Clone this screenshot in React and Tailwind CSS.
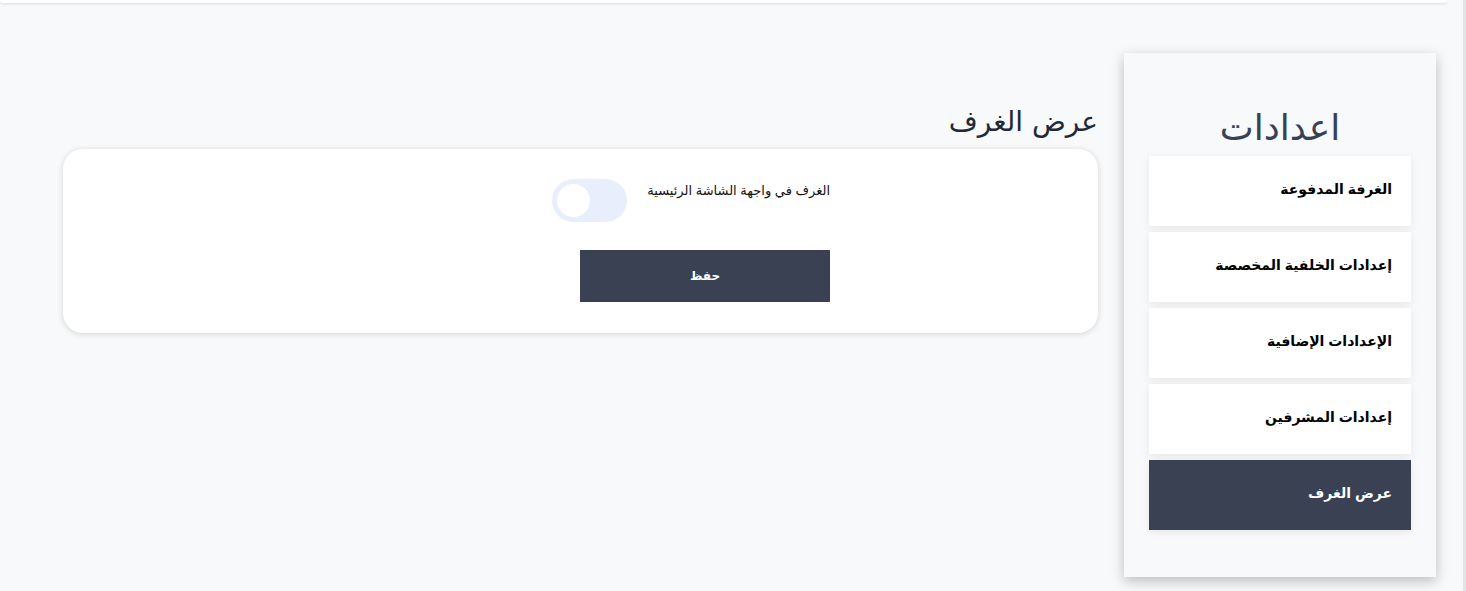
import { useState } from 'react';

const menu = [
  { name: 'الغرفة المدفوعة' },
  { name: 'إعدادات الخلفية المخصصة' },
  { name: 'الإعدادات الإضافية' },
  { name: 'إعدادات المشرفين' },
  { name: 'عرض الغرف', active: true },
];

export default function App() {
  const [onHome, setOnHome] = useState(false);

  return (
    <div dir="rtl" className="min-h-screen w-full bg-[#f8f9fa] border-r-[3px] border-[#e4e4e7] font-['DejaVu_Sans',sans-serif]">
      {/* Header (scrolled) */}
      <div className="h-[3px] mr-[16px] bg-white rounded-b-xl shadow-[0_1px_3px_rgba(0,0,0,0.12)]" />

      <div className="flex items-start">
        {/* Sidebar */}
        <aside className="w-[312px] shrink-0 mt-[50px] mr-[27px] bg-[#f8f9fb] shadow-[0_4px_12px_rgba(0,0,0,0.25)] px-[25px] pt-[50px] pb-[47px]">
          <h1 className="text-center text-[36px] leading-[50px] text-[#374151] mb-[3px]">اعدادات</h1>
          <nav className="flex flex-col gap-[6px]">
            {menu.map((item) => (
              <button
                key={item.name}
                className={`h-[70px] w-full text-right pr-[19px] pb-[3px] text-[14px] font-bold font-['Liberation_Sans','DejaVu_Sans',sans-serif] shadow-[0_2px_8px_rgba(0,0,0,0.08)] ${
                  item.active ? 'bg-[#394152] text-white' : 'bg-white text-black'
                }`}
              >
                {item.name}
              </button>
            ))}
          </nav>
        </aside>

        {/* Main */}
        <main className="flex-1 mr-[26px] ml-[63px] mt-[99px]">
          <h2 className="text-[28px] leading-[40px] text-[#1f2937] mb-[7px]">عرض الغرف</h2>
          <div className="bg-white rounded-[20px] shadow-[0_1px_6px_rgba(0,0,0,0.15)] pt-[30px] pb-[31px]">
            <div className="w-[279px] mr-[268px] flex flex-col">
              <div className="flex items-start gap-[20px]">
                <span className="text-[13px] leading-[20px] mt-[2px] text-[#111] font-['Liberation_Sans','DejaVu_Sans',sans-serif]">
                  الغرف في واجهة الشاشة الرئيسية
                </span>
                <button
                  onClick={() => setOnHome(!onHome)}
                  className="w-[75px] h-[43px] rounded-full bg-[#e8eefb] flex items-center px-[5px] justify-end"
                >
                  <span className="w-[33px] h-[33px] rounded-full bg-white block" />
                </button>
              </div>
              <button className="mt-[28px] w-[250px] h-[52px] bg-[#394152] text-white text-[12px] font-bold font-['Liberation_Sans','DejaVu_Sans',sans-serif]">
                حفظ
              </button>
            </div>
          </div>
        </main>
      </div>
    </div>
  );
}
